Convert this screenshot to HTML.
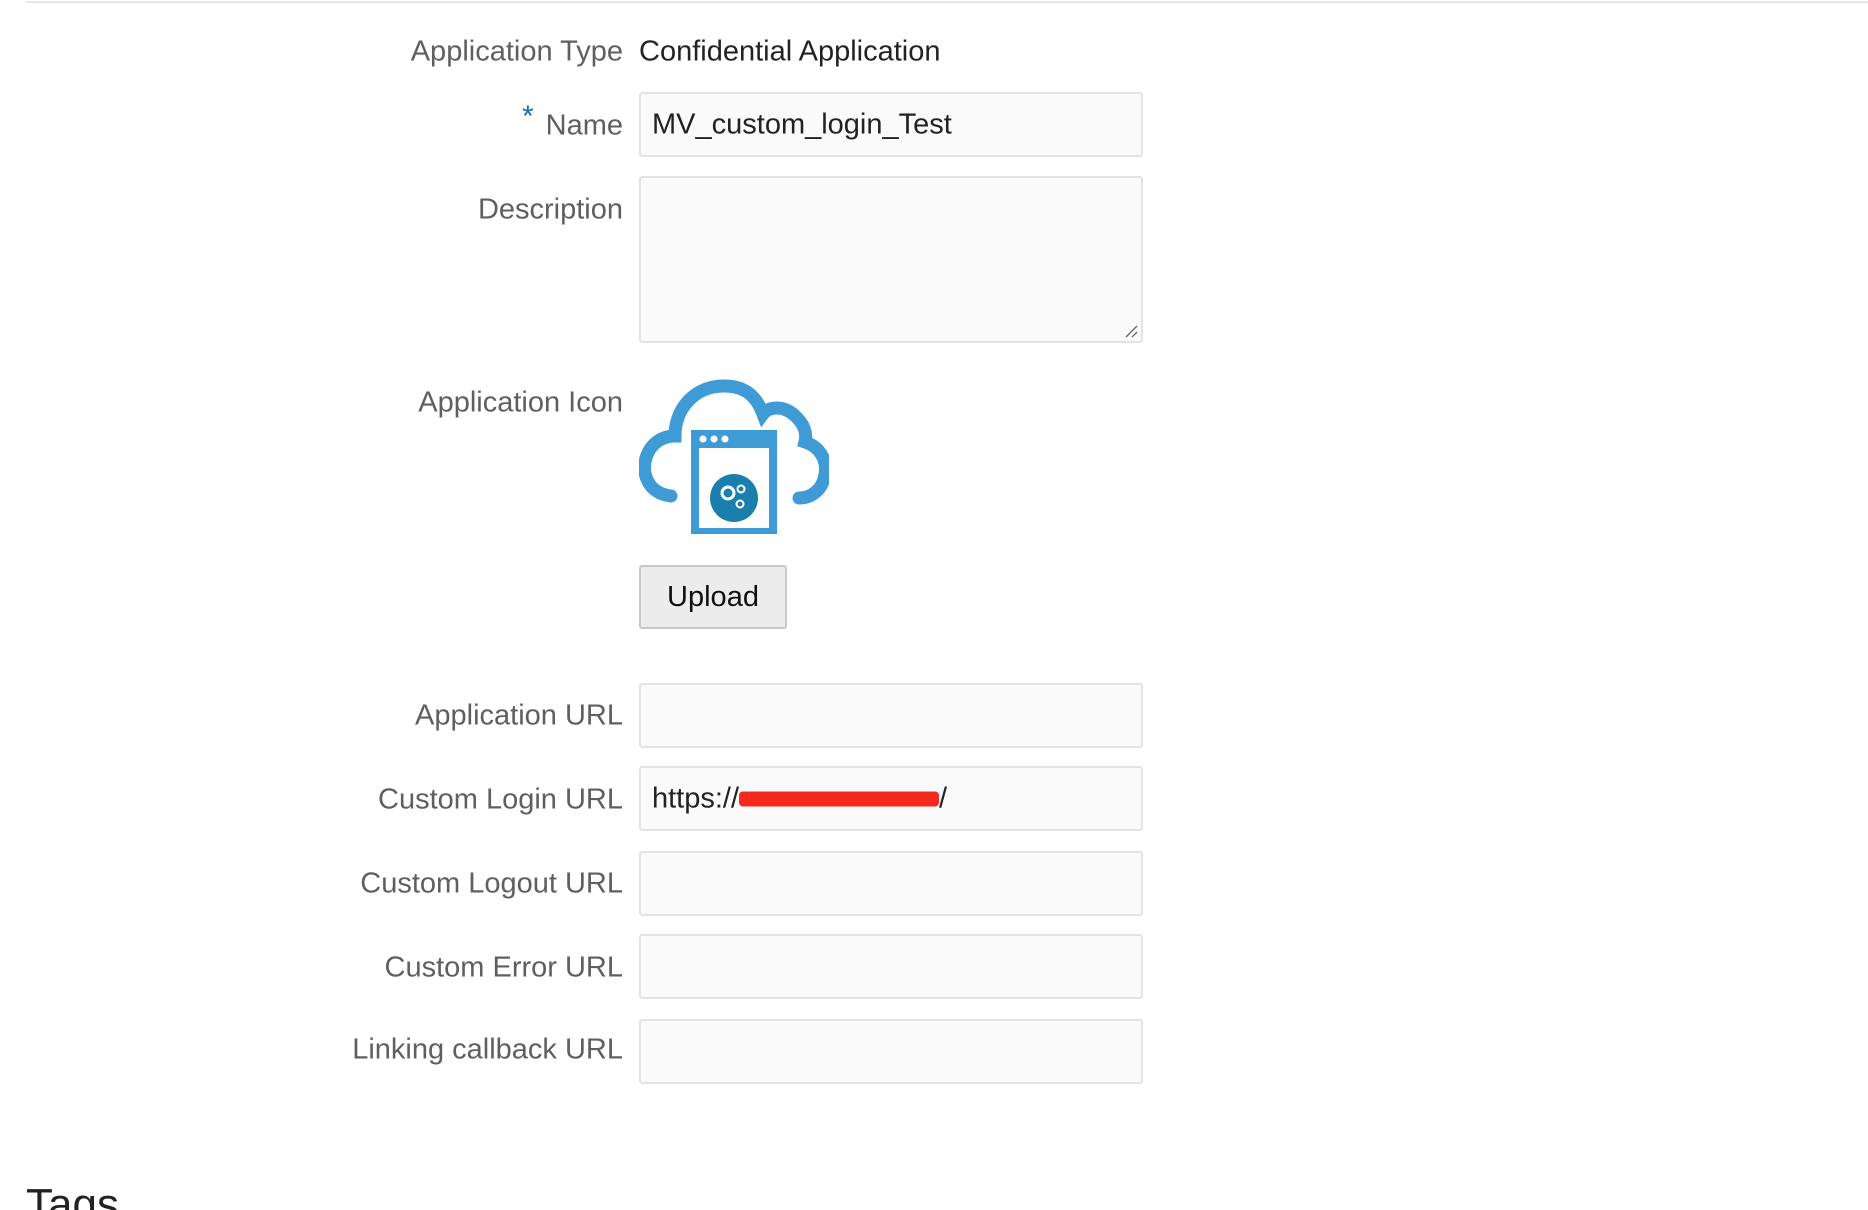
<!DOCTYPE html>
<html><head><meta charset="utf-8"><style>
html,body{margin:0;padding:0;background:#fff;width:1868px;height:1210px;overflow:hidden;position:relative;font-family:"Liberation Sans",sans-serif;}
.a{position:absolute}
.lbl{position:absolute;right:1245px;font-size:29px;color:#5f5f5f;white-space:nowrap;transform:translateY(-50%)}
.inp{position:absolute;left:639px;width:500px;height:61px;background:#fafafa;border:2px solid #e4e4e4;border-radius:3px}
.val{position:absolute;left:11px;top:50%;transform:translateY(-50%);font-size:29px;color:#222;white-space:nowrap}
</style></head><body>
<div class="a" style="left:26px;top:1px;width:1842px;height:2px;background:#e6e6e6"></div>

<div class="lbl" style="top:52px">Application Type</div>
<div class="a" style="left:639px;top:52px;transform:translateY(-50%);font-size:29px;color:#222">Confidential Application</div>

<div class="lbl" style="top:126px">Name</div>
<div class="a" style="left:522px;top:100px;font-size:30px;color:#1a6fb0">*</div>
<div class="inp" style="top:92px"><div class="val">MV_custom_login_Test</div></div>

<div class="lbl" style="top:210px">Description</div>
<div class="inp" style="top:176px;height:163px">
<svg class="a" style="right:2px;bottom:2px" width="16" height="16"><path d="M3 14L14 3M9 14L14 9" stroke="#666" stroke-width="1.3"/></svg>
</div>

<div class="lbl" style="top:403px">Application Icon</div>
<svg class="a" style="left:639px;top:378px" width="190" height="158" viewBox="0 0 190 158">
<path d="M32 118 C8 115 4 95 6 84 C10 64 25 58 36 58 C36 30 56 8 85 8 C108 8 118 20 124 36 C130 28 144 28 154 36 C166 46 168 56 166 64 C184 70 188 86 186 96 C184 112 172 120 160 120" fill="none" stroke="#3f9bd6" stroke-width="13" stroke-linecap="round"/>
<rect x="52" y="52" width="86" height="104" fill="#3f9bd6"/>
<rect x="60" y="70" width="70" height="80" fill="#fff"/>
<circle cx="64" cy="61" r="3.5" fill="#fff"/><circle cx="75" cy="61" r="3.5" fill="#fff"/><circle cx="86" cy="61" r="3.5" fill="#fff"/>
<circle cx="95" cy="120" r="24" fill="#1b7fae"/>
<circle cx="89" cy="115" r="6" fill="none" stroke="#fff" stroke-width="3"/>
<circle cx="102" cy="111" r="3.5" fill="none" stroke="#fff" stroke-width="2"/>
<circle cx="101" cy="126" r="3.5" fill="none" stroke="#fff" stroke-width="2"/>
</svg>

<div class="a" style="left:639px;top:565px;width:144px;height:60px;background:#ececec;border:2px solid #c8c8c8;border-radius:3px;font-size:29px;color:#111;text-align:center;line-height:60px">Upload</div>

<div class="lbl" style="top:716px">Application URL</div>
<div class="inp" style="top:683px"></div>

<div class="lbl" style="top:800px">Custom Login URL</div>
<div class="inp" style="top:766px"><div class="val">https://<span style="display:inline-block;width:200px;height:15px;background:#f42a1f;border-radius:4px;vertical-align:middle"></span>/</div></div>

<div class="lbl" style="top:884px">Custom Logout URL</div>
<div class="inp" style="top:851px"></div>

<div class="lbl" style="top:968px">Custom Error URL</div>
<div class="inp" style="top:934px"></div>

<div class="lbl" style="top:1050px">Linking callback URL</div>
<div class="inp" style="top:1019px"></div>

<div class="a" style="left:26px;top:1180px;font-size:44px;color:#222">Tags</div>
</body></html>
